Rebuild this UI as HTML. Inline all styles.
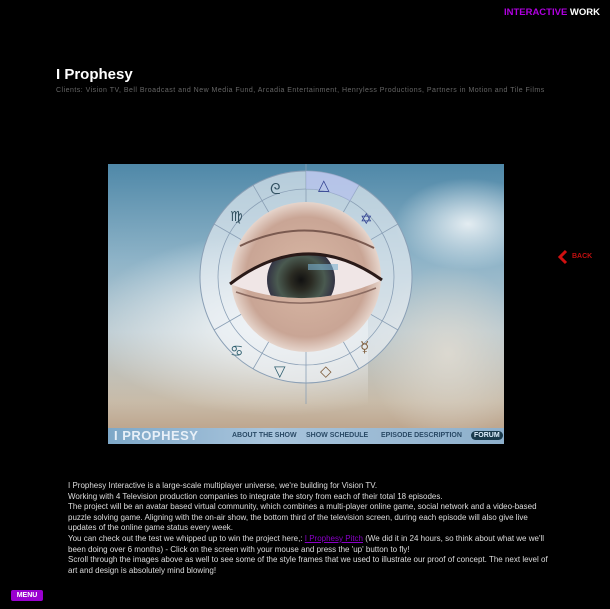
<!DOCTYPE html>
<html><head><meta charset="utf-8"><style>
*{margin:0;padding:0;box-sizing:border-box}
body{width:610px;height:609px;background:#000;position:relative;overflow:hidden;font-family:"Liberation Sans",sans-serif}
.abs{position:absolute}
</style></head><body>
<div class="abs" style="right:10px;top:7px;font-size:9.5px;font-weight:bold;white-space:nowrap"><span style="color:#b000e0">INTERACTIVE</span> <span style="color:#fff">WORK</span></div>
<div class="abs" style="left:56px;top:66px;font-size:15px;font-weight:bold;color:#fff">I Prophesy</div>
<div class="abs" style="left:56px;top:87px;font-size:7px;color:#666;letter-spacing:0.48px;white-space:nowrap">Clients: Vision TV, Bell Broadcast and New Media Fund, Arcadia Entertainment, Henryless Productions, Partners in Motion and Tile Films</div>

<div class="abs" style="left:108px;top:164px;width:396px;height:280px;overflow:hidden;background:linear-gradient(180deg,#4f88a8 0%,#8fb4c8 35%,#b9c9d0 60%,#c8bba8 85%,#b89a80 100%)">
<div class="abs" style="left:-40px;top:60px;width:300px;height:200px;background:radial-gradient(ellipse at 70% 50%,rgba(255,255,255,0.95),rgba(255,255,255,0) 65%)"></div>
<div class="abs" style="left:280px;top:10px;width:160px;height:100px;background:radial-gradient(ellipse,rgba(255,255,255,0.8),rgba(255,255,255,0) 65%)"></div>
<div class="abs" style="left:260px;top:100px;width:160px;height:180px;background:radial-gradient(ellipse,rgba(225,220,210,0.85),rgba(220,215,205,0) 70%)"></div>
<svg class="abs" style="left:0;top:0" width="396" height="280">
<circle cx="198" cy="113" r="106" fill="rgba(235,240,245,0.65)" stroke="#8a9fb5" stroke-width="1"/>
<circle cx="198" cy="113" r="88" fill="none" stroke="#8a9fb5" stroke-width="0.8"/>
<line x1="198" y1="0" x2="198" y2="240" stroke="#8a9fb5" stroke-width="0.8"/>
<g stroke="#8a9fb5" stroke-width="0.8">
<line x1="145" y1="21" x2="251" y2="205"/><line x1="251" y1="21" x2="145" y2="205"/>
<line x1="106" y1="60" x2="290" y2="166"/><line x1="290" y1="60" x2="106" y2="166"/>
</g>
<path d="M198 7 A106 106 0 0 1 251 21 L242 37 A88 88 0 0 0 198 25Z" fill="rgba(180,190,240,0.6)"/>
<text x="210" y="26" font-size="15" fill="#304090" font-family="DejaVu Sans">△</text>
<text x="162" y="30" font-size="15" fill="#305060" font-family="DejaVu Sans">ᘓ</text>
<text x="122" y="57" font-size="14" fill="#305060" font-family="DejaVu Sans">♍</text>
<text x="252" y="60" font-size="15" fill="#304090" font-family="DejaVu Sans">✡</text>
<text x="122" y="192" font-size="15" fill="#306070" font-family="DejaVu Sans">♋</text>
<text x="166" y="212" font-size="15" fill="#306070" font-family="DejaVu Sans">▽</text>
<text x="212" y="212" font-size="15" fill="#806040" font-family="DejaVu Sans">◇</text>
<text x="252" y="188" font-size="15" fill="#806040" font-family="DejaVu Sans">☿</text>
<defs>
<radialGradient id="sk" cx="50%" cy="50%" r="50%"><stop offset="0" stop-color="#d9b8a5"/><stop offset="0.8" stop-color="#c9a595"/><stop offset="1" stop-color="#e6d5cc"/></radialGradient>
<radialGradient id="ir" cx="50%" cy="50%" r="50%"><stop offset="0" stop-color="#111"/><stop offset="0.3" stop-color="#2a2a22"/><stop offset="0.7" stop-color="#4a5a50"/><stop offset="1" stop-color="#334"/></radialGradient>
<clipPath id="ec"><path d="M122 120 Q198 62 274 116 Q198 150 122 120Z"/></clipPath>
</defs>
<circle cx="198" cy="113" r="75" fill="url(#sk)"/>
<path d="M132 82 Q198 50 266 84" fill="none" stroke="#7a5a50" stroke-width="2"/>
<path d="M122 120 Q198 62 274 116 Q198 150 122 120Z" fill="#f0e6e6"/>
<g clip-path="url(#ec)"><circle cx="193" cy="116" r="34" fill="url(#ir)"/><rect x="200" y="100" width="30" height="6" fill="#7ab0d0" opacity="0.6"/></g>
<path d="M122 120 Q198 62 274 116" fill="none" stroke="#2a1a18" stroke-width="3"/>
<path d="M128 128 Q198 152 268 124" fill="none" stroke="#8a6a60" stroke-width="1.5"/>
</svg>
<div class="abs" style="left:0;top:264px;width:396px;height:16px;background:linear-gradient(90deg,#7ea8c8,#a8c4dc 40%,#8eb0cc);font-weight:bold;color:#2a4a66;white-space:nowrap">
<span class="abs" style="left:6px;top:0;font-size:13px;color:#e8f0f8;letter-spacing:0.5px">I PROPHESY</span>
<span class="abs" style="left:124px;top:4px;font-size:7px">ABOUT THE SHOW</span>
<span class="abs" style="left:198px;top:4px;font-size:7px">SHOW SCHEDULE</span>
<span class="abs" style="left:273px;top:4px;font-size:7px">EPISODE DESCRIPTION</span>
<span class="abs" style="left:363px;top:3px;font-size:7px;background:#1a3a4c;color:#e0f0ff;border-radius:5px;padding:1px 3px">FORUM</span>
</div>
</div>

<svg class="abs" style="left:557px;top:249px" width="12" height="16"><path d="M9 2 L3 8 L9 14" fill="none" stroke="#d01010" stroke-width="3"/></svg>
<div class="abs" style="left:572px;top:253px;font-size:7px;font-weight:bold;color:#c01010">BACK</div>

<div class="abs" style="left:68px;top:481px;width:482px;font-size:8px;line-height:10.6px;color:#ddd">I Prophesy Interactive is a large-scale multiplayer universe, we're building for Vision TV.<br>Working with 4 Television production companies to integrate the story from each of their total 18 episodes.<br>The project will be an avatar based virtual community, which combines a multi-player online game, social network and a video-based puzzle solving game. Aligning with the on-air show, the bottom third of the television screen, during each episode will also give live updates of the online game status every week.<br>You can check out the test we whipped up to win the project here,: <span style="color:#8a00c8;text-decoration:underline">I Prophesy Pitch</span> (We did it in 24 hours, so think about what we we'll been doing over 6 months) - Click on the screen with your mouse and press the 'up' button to fly!<br>Scroll through the images above as well to see some of the style frames that we used to illustrate our proof of concept. The next level of art and design is absolutely mind blowing!</div>

<div class="abs" style="left:11px;top:590px;width:32px;height:11px;background:#9a00d0;border-radius:2px;color:#fff;font-size:7px;font-weight:bold;text-align:center;line-height:11px">MENU</div>
</body></html>
